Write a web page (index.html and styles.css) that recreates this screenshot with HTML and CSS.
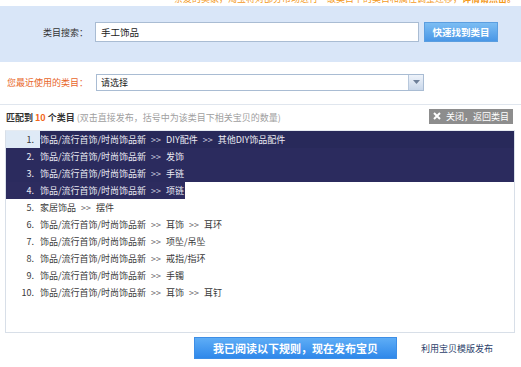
FILE: index.html
```html
<!DOCTYPE html>
<html lang="zh">
<head>
<meta charset="utf-8">
<title>类目选择</title>
<link rel="stylesheet" href="styles.css">
</head>
<body>
<div class="notice"><span class="notice-text">亲爱的卖家，淘宝将对部分市场进行一级类目下的类目和属性调整迁移，<b>详情请点击。</b></span></div>

<div class="search">
  <div class="search-row">
    <span class="label">类目搜索：</span>
    <div class="input">手工饰品</div>
    <button class="find-btn">快速找到类目</button>
  </div>
</div>

<div class="recent">
  <span class="label recent-label">您最近使用的类目：</span>
  <div class="select">
    <span class="select-text">请选择</span>
    <span class="select-arrow"><svg width="7" height="4" viewBox="0 0 7 4"><path d="M0 0h7L3.5 4z" fill="#6d7f99"/></svg></span>
  </div>
</div>

<div class="results">
  <div class="results-head">
    <span class="head-text"><b>匹配到 <em class="count">10</em> 个类目</b> <span class="hint">(双击直接发布，括号中为该类目下相关宝贝的数量)</span></span>
    <button class="close-btn"><svg width="8" height="8" viewBox="0 0 8 8"><path d="M1 1l6 6M7 1l-6 6" stroke="#fff" stroke-width="2"/></svg>关闭，返回类目</button>
  </div>
  <ol class="list">
    <li class="row sel first"><span class="num">1.</span><span class="txt">饰品/流行首饰/时尚饰品新<i>&gt;&gt;</i>DIY配件<i>&gt;&gt;</i>其他DIY饰品配件</span></li>
    <li class="row sel"><span class="num">2.</span><span class="txt">饰品/流行首饰/时尚饰品新<i>&gt;&gt;</i>发饰</span></li>
    <li class="row sel"><span class="num">3.</span><span class="txt">饰品/流行首饰/时尚饰品新<i>&gt;&gt;</i>手链</span></li>
    <li class="row part"><span class="hl"><span class="num">4.</span><span class="txt">饰品/流行首饰/时尚饰品新<i>&gt;&gt;</i>项链</span></span></li>
    <li class="row"><span class="num">5.</span><span class="txt">家居饰品<i>&gt;&gt;</i>摆件</span></li>
    <li class="row"><span class="num">6.</span><span class="txt">饰品/流行首饰/时尚饰品新<i>&gt;&gt;</i>耳饰<i>&gt;&gt;</i>耳环</span></li>
    <li class="row"><span class="num">7.</span><span class="txt">饰品/流行首饰/时尚饰品新<i>&gt;&gt;</i>项坠/吊坠</span></li>
    <li class="row"><span class="num">8.</span><span class="txt">饰品/流行首饰/时尚饰品新<i>&gt;&gt;</i>戒指/指环</span></li>
    <li class="row"><span class="num">9.</span><span class="txt">饰品/流行首饰/时尚饰品新<i>&gt;&gt;</i>手镯</span></li>
    <li class="row"><span class="num">10.</span><span class="txt">饰品/流行首饰/时尚饰品新<i>&gt;&gt;</i>耳饰<i>&gt;&gt;</i>耳钉</span></li>
  </ol>
</div>

<div class="actions">
  <button class="publish-btn">我已阅读以下规则，现在发布宝贝</button>
  <a class="tpl-link" href="#">利用宝贝模版发布</a>
</div>
</body>
</html>
```

FILE: styles.css
```css
* { box-sizing: border-box; }
html, body { margin: 0; padding: 0; background: #fff; }
body {
  width: 521px;
  height: 367px;
  overflow: hidden;
  font-family: "Noto Sans CJK SC", "Noto Sans", sans-serif;
  font-size: 9px;
  color: #333;
}
b { font-weight: bold; }

.notice {
  height: 6px;
  overflow: hidden;
  text-align: right;
  padding-right: 5px;
  white-space: nowrap;
  color: #f39a1e;
}
.notice-text {
  display: block;
  line-height: 12px;
  margin-top: -7px;
}

.search {
  background: #d9e6f8;
  height: 56px;
  padding-top: 16px;
}
.search-row {
  display: flex;
  align-items: center;
  height: 20px;
}
.label {
  width: 88px;
  text-align: right;
  color: #333;
  white-space: nowrap;
}
.input {
  margin-left: 7px;
  width: 324px;
  height: 20px;
  background: #fff;
  border: 1px solid #a9bcd3;
  padding-left: 5px;
  line-height: 18px;
  font-size: 9.5px;
  color: #222;
}
.find-btn {
  margin-left: 5px;
  width: 74px;
  height: 20px;
  border: 1px solid #5b9ee0;
  background: linear-gradient(#7cbdf3, #4a97e6);
  color: #fff;
  font-family: inherit;
  font-size: 9.5px;
  font-weight: bold;
  padding: 0;
}

.recent {
  height: 42px;
  display: flex;
  align-items: center;
  padding-bottom: 2px;
}
.recent-label {
  color: #e8662a;
}
.select {
  margin-left: 8px;
  width: 328px;
  height: 17px;
  border: 1px solid #a9bcd3;
  display: flex;
  align-items: center;
  justify-content: space-between;
  padding-left: 4px;
}
.select-text { color: #222; }
.select-arrow {
  width: 15px;
  height: 15px;
  background: linear-gradient(#eef3fa, #c9d7ea);
  border-left: 1px solid #b8c8dc;
  display: flex;
  align-items: center;
  justify-content: center;
}

.results {
  border-top: 1px solid #e0e6ee;
}
.results-head {
  height: 25px;
  display: flex;
  align-items: center;
  justify-content: space-between;
  padding: 0 8px 0 6px;
}
.head-text { white-space: nowrap; }
.count {
  font-style: normal;
  color: #f2671b;
}
.hint { color: #a0a0a0; }
.close-btn {
  width: 84px;
  height: 15px;
  border: 0;
  background: #8d8d8d;
  color: #fff;
  font-family: inherit;
  font-size: 9px;
  padding: 0 0 0 4px;
  display: flex;
  align-items: center;
  gap: 5px;
  margin-top: -3px;
}

.list {
  list-style: none;
  margin: 0 6px 0 5px;
  padding: 0;
  height: 203px;
  border: 1px solid #d8dfe8;
  border-top-color: #e6ebf1;
}
.row {
  height: 17px;
  line-height: 17px;
  display: flex;
  white-space: nowrap;
  color: #3a3a3a;
}
.row i {
  font-style: normal;
  color: #666;
  padding: 0 5px;
}
.num {
  width: 29px;
  text-align: right;
  padding-right: 1px;
}
.txt { margin-left: 5px; }
.hl { display: flex; background: #2d2c5f; color: #e9e9f2; }
.hl .txt { padding-right: 1px; }

.sel {
  background: #2b2b5e;
  color: #ececf4;
}
.sel i, .hl i { color: #d0d0e0; }
.sel.first {
  background: linear-gradient(to right, #dfeaf6 0, #dfeaf6 34px, #28295a 34px);
}
.sel.first .num { color: #333; }

.actions {
  display: flex;
  align-items: center;
  padding: 4px 0 0 194px;
}
.publish-btn {
  width: 203px;
  height: 22px;
  border: 1px solid #3d8ee6;
  background: linear-gradient(#5eadf6, #2f88ea);
  color: #fff;
  font-family: inherit;
  font-size: 11px;
  font-weight: bold;
  padding: 0;
}
.tpl-link {
  margin-left: 24px;
  color: #2d3f6b;
  text-decoration: none;
  font-size: 9px;
}
```
